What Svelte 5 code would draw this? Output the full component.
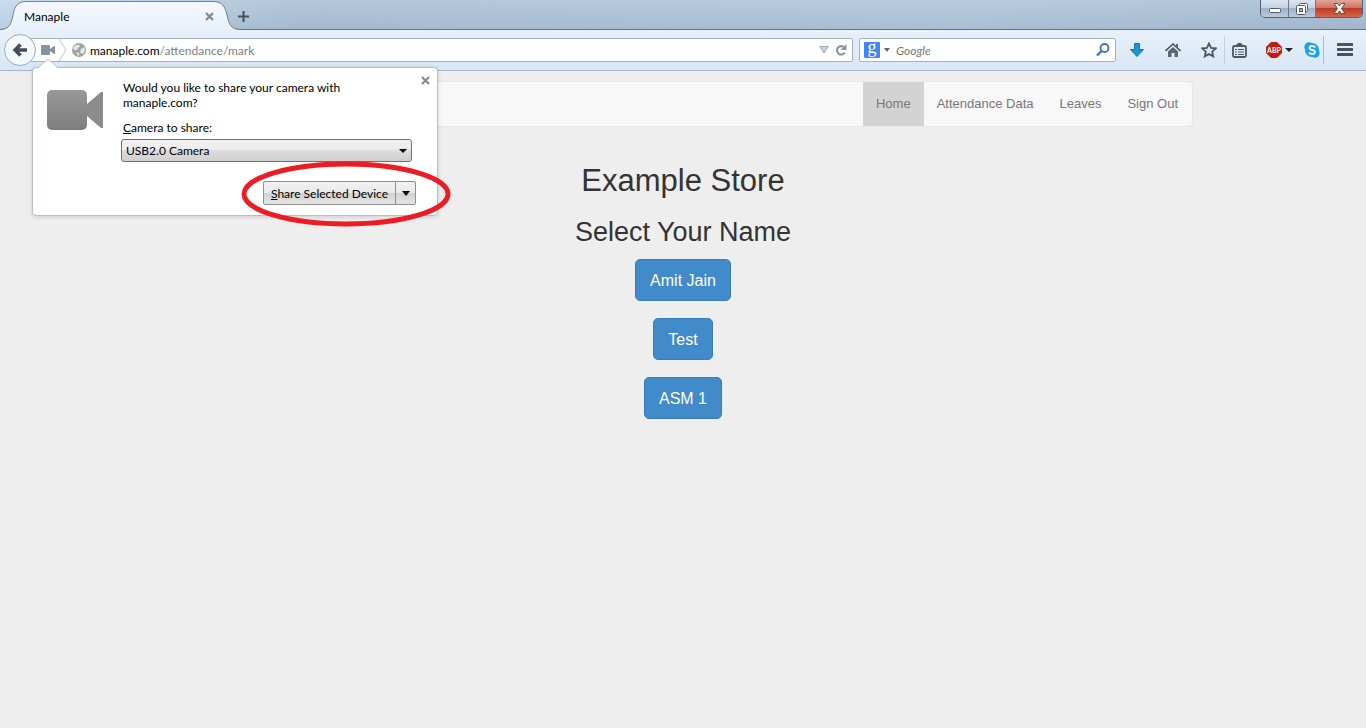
<script>
  const links = ['Home', 'Attendance Data', 'Leaves', 'Sign Out'];
  const names = ['Amit Jain', 'Test', 'ASM 1'];
  let query = $state('');
</script>

<div class="browser">
  <header class="tabs">
    <div class="tab">
      <svg class="tab-shape" viewBox="0 0 240 30" preserveAspectRatio="none" aria-hidden="true">
        <defs>
          <linearGradient id="tabfill" x1="0" y1="0" x2="0" y2="1">
            <stop offset="0" stop-color="#f4f8fd" /><stop offset="1" stop-color="#e8f1fa" />
          </linearGradient>
        </defs>
        <path d="M0 30C10 29 11 24 13 15C15 5 18 2 27 2H213C222 2 225 6 227 15C229 25 231 29 240 30Z" fill="url(#tabfill)" />
        <path d="M0 29.500C10 29 11 24 13 15C15 5 18 1.500 27 1.500H213C222 1.500 225 6 227 15C229 25 231 29 240 29.500" fill="none" stroke="#71849a" />
      </svg>
      <span class="title">Manaple</span>
      <button class="plain close" aria-label="Close tab">
        <svg width="9" height="9" viewBox="0 0 9 9"><path d="M1 1l7 7M8 1l-7 7" stroke="#7d8995" stroke-width="2.200" /></svg>
      </button>
    </div>
    <button class="plain new" aria-label="New tab">
      <svg width="11" height="11" viewBox="0 0 11 11"><path d="M5.500 0v11M0 5.500h11" stroke="#44505b" stroke-width="2" /></svg>
    </button>
    <div class="controls">
      <button class="min" aria-label="Minimize">
        <svg width="14" height="6" viewBox="0 0 14 6"><rect x="1.500" y=".5" width="11" height="4" rx="1" fill="#fff" stroke="#4f5b69" /></svg>
      </button>
      <button class="max" aria-label="Restore">
        <svg width="12" height="12" viewBox="0 0 12 12"><rect x="3.500" y=".5" width="8" height="8" rx="1" fill="#fff" stroke="#4f5b69" /><rect x=".5" y="2.500" width="9" height="9" rx="1" fill="#fff" stroke="#4f5b69" /><rect x="3.500" y="5.500" width="3" height="3" fill="#9fb2c6" stroke="#4f5b69" /></svg>
      </button>
      <button class="exit" aria-label="Close window">
        <svg width="13" height="11" viewBox="0 0 13 11"><path d="M1 .5h3.500l2 2.500 2-2.500H12L8.500 5.500l3.500 5H8.500l-2-2.500-2 2.500H1l3.500-5z" fill="#fff" stroke="#5b4a52" /></svg>
      </button>
    </div>
  </header>

  <div class="toolbar">
    <button class="back" aria-label="Back">
      <svg width="16" height="16" viewBox="0 0 16 16"><path d="M8.500 2.500L3 8L8.500 13.500M3.500 8H15" fill="none" stroke="#424f5a" stroke-width="3.400" /></svg>
    </button>
    <div class="url">
      <svg width="14" height="10" viewBox="0 0 14 10"><rect width="9" height="10" rx="1" fill="#8493a3" /><path d="M9 4l4-3h1v8h-1L9 6z" fill="#8493a3" /></svg>
      <svg class="chevron" width="9" height="22" viewBox="0 0 9 22"><path d="M1 0l7 11-7 11" fill="none" stroke="#b9c5d1" /></svg>
      <svg class="globe" width="14" height="14" viewBox="0 0 14 14"><circle cx="7" cy="7" r="7" fill="#a3a3a3" /><path d="M3 2.500l4-1 1 2-2 1.500-1 2H2L1 5zM9 6l3-2 1 3-1 3-2 1-2-2zM4 9l3 1 .5 2L6 13z" fill="#e6e6e6" /></svg>
      <span class="address">manaple.com<i>/attendance/mark</i></span>
      <button class="plain" aria-label="History"><svg width="10" height="8" viewBox="0 0 10 8"><path d="M.7 .5h8.600L5 7z" fill="#ccd3da" stroke="#9ba8b5" /></svg></button>
      <button class="plain reload" aria-label="Reload"><svg width="12" height="12" viewBox="0 0 12 12"><path d="M8.800 3A4.200 4.200 0 1 0 9.800 8.500" fill="none" stroke="#8997a5" stroke-width="2.200" /><path d="M11.500 0v6h-6z" fill="#8997a5" /></svg></button>
    </div>
    <div class="search">
      <span class="google">g</span>
      <svg width="6" height="4" viewBox="0 0 6 4"><path d="M0 0h6L3 4z" fill="#666" /></svg>
      <input aria-label="Search" placeholder="Google" bind:value={query} />
      <button class="plain" aria-label="Search Google"><svg width="14" height="14" viewBox="0 0 14 14"><circle cx="8.500" cy="5" r="4" fill="none" stroke="#3f74b1" stroke-width="1.800" /><path d="M5.500 8L1 12.500" stroke="#3f74b1" stroke-width="2.400" /></svg></button>
    </div>
    <nav class="tools" aria-label="Browser tools">
      <button class="plain t36" aria-label="Downloads"><svg width="14" height="14" viewBox="0 0 14 14"><path d="M4.500 .5h5v6h4L7 13.500 .5 6.500h4z" fill="#1a96d5" stroke="#0878b7" /></svg></button>
      <button class="plain t36" aria-label="Home page"><svg width="16" height="15" viewBox="0 0 16 15"><path d="M.5 8L8 1l7.500 7" fill="none" stroke="#4b5762" stroke-width="1.600" /><path d="M11 1h2v4l-2-2zM3 8.500l5-4.500 5 4.500V14H9.500v-4h-3v4H3z" fill="#5b6670" /></svg></button>
      <button class="plain t36" aria-label="Bookmark"><svg width="16" height="16" viewBox="0 0 16 16"><path d="M8 1.500l2 4.400 4.800.5-3.600 3.200 1 4.800L8 12l-4.200 2.400 1-4.800L1.200 6.400 6 5.900z" fill="none" stroke="#4b5762" stroke-width="1.800" /></svg></button>
      <button class="plain list" aria-label="Bookmarks list"><svg width="15" height="15" viewBox="0 0 15 15"><rect x="1" y="3" width="13" height="11" rx="1.500" fill="none" stroke="#4b5762" stroke-width="1.800" /><path d="M4 3V1.500h1.500V0h4v1.500H11V3z" fill="#4b5762" /><path d="M3 6.500h2m1 0h6M3 9h2m1 0h6M3 11.500h2m1 0h6" stroke="#4b5762" /></svg></button>
      <button class="plain abp" aria-label="Adblock Plus">
        <svg width="16" height="16" viewBox="0 0 16 16"><path d="M5 .5h6L15.500 5v6L11 15.500H5L.5 11V5z" fill="#c81a0b" stroke="#9d2b20" /><text x="8" y="11" text-anchor="middle" font-size="7" font-weight="700" fill="#fff">ABP</text></svg>
        <svg width="8" height="4" viewBox="0 0 8 4"><path d="M0 0h8L4 4z" fill="#222" /></svg>
      </button>
      <button class="plain skype" aria-label="Skype"><svg width="16" height="16" viewBox="0 0 16 16"><circle cx="5" cy="5" r="4.700" fill="#12a5ee" /><circle cx="11" cy="11" r="4.700" fill="#12a5ee" /><circle cx="8" cy="8" r="7" fill="#12a5ee" /><path d="M11 5.500C10 3.500 5.500 3.500 5.500 6c0 2.500 5.500 1.500 5.500 4 0 2.500-5 2.500-6 .3" fill="none" stroke="#fff" stroke-width="1.900" /></svg></button>
      <button class="plain menu" aria-label="Menu"><svg width="16" height="14" viewBox="0 0 16 14"><path d="M1 1.500h14M1 6.500h14M1 11.500h14" stroke="#48535e" stroke-width="3" stroke-linecap="round" /></svg></button>
    </nav>
  </div>

  <main>
    <nav class="navbar" aria-label="Main">
      {#each links as link, i}
        <a href="#{i}" class:active={i === 0}>{link}</a>
      {/each}
    </nav>
    <h1>Example Store</h1>
    <h2>Select Your Name</h2>
    <div class="names">
      {#each names as name}<button>{name}</button>{/each}
    </div>
  </main>

  <section class="popup" aria-label="Share camera">
    <svg class="arrow" width="20" height="10" viewBox="0 0 20 10"><path d="M0 10L10 1l10 9" fill="#fff" stroke="#b6c2ce" /><path d="M1 10h18" stroke="#fff" /></svg>
    <svg class="camera" width="56" height="40" viewBox="0 0 56 40"><defs><linearGradient id="cam" x1="0" y1="0" x2="0" y2="1"><stop stop-color="#999" /><stop offset="1" stop-color="#7d7d7d" /></linearGradient></defs><rect width="40" height="40" rx="5" fill="url(#cam)" /><path d="M40 14L54 2h2v36h-2L40 26z" fill="#8c8c8c" /></svg>
    <div class="body">
      <p>Would you like to share your camera with manaple.com?</p>
      <label for="device"><u>C</u>amera to share:</label>
      <div class="picker">
        <select id="device"><option>USB2.0 Camera</option></select>
        <svg width="8" height="4" viewBox="0 0 8 4"><path d="M0 0h8L4 4z" /></svg>
      </div>
      <div class="split">
        <button class="share"><u>S</u>hare Selected Device</button>
        <button class="more" aria-label="More options"><svg width="8" height="5" viewBox="0 0 8 5"><path d="M0 0h8L4 5z" /></svg></button>
      </div>
    </div>
    <button class="plain dismiss" aria-label="Dismiss"><svg width="9" height="9" viewBox="0 0 9 9"><path d="M1 1l7 7M8 1l-7 7" stroke="#848e99" stroke-width="2.200" /></svg></button>
    <svg class="ring" width="210" height="66" viewBox="0 0 210 66" aria-hidden="true"><ellipse cx="105" cy="33" rx="102" ry="30" fill="none" stroke="#ed1c24" stroke-width="5" /></svg>
  </section>
</div>

<style>
  :global(body) { margin: 0; background: #eee; }
  * { box-sizing: border-box; }
  svg { display: block; flex: none; }
  .browser { position: relative; font: 12px/15px Lato, "Open Sans", sans-serif; color: #000; }
  button { font: inherit; }
  .plain { display: flex; align-items: center; justify-content: center; padding: 0; border: 0; background: none; }
  .tabs { display: flex; height: 30px; background: linear-gradient(rgba(255,255,255,.08), rgba(90,110,135,.12)), linear-gradient(90deg, #c5daee 0, #afc3d7 300px, #b4c8dc 70%, #abc0d5); box-shadow: inset 0 -1px #5f7389; }
  .tab { position: relative; display: flex; align-items: center; width: 240px; padding: 2px 26px 0 24px; }
  .tab-shape { position: absolute; inset: 0; width: 240px; height: 30px; }
  .title { position: relative; flex: 1; }
  .close { position: relative; }
  .new { width: 6px; overflow: visible; padding-top: 2px; }
  .controls { display: flex; height: 18px; margin-left: auto; margin-right: 3px; border: 1px solid #536274; border-top: 0; border-radius: 0 0 5px 5px; overflow: hidden; }
  .controls button { display: flex; align-items: center; justify-content: center; border: 0; padding: 0; background: linear-gradient(#dbe5ef, #c4d1df 48%, #9fb2c7 50%, #bccbdc); }
  .controls .min { width: 28px; padding-top: 4px; border-right: 1px solid #69788a; }
  .controls .max { width: 27px; border-right: 1px solid #69788a; }
  .controls .exit { width: 46px; background: linear-gradient(#e1a598, #d1705f 48%, #bd3a22 50%, #d5674a); }
  .toolbar { display: flex; align-items: center; height: 41px; padding-left: 4px; background: linear-gradient(#e8f1fa, #d8e6f5); border-bottom: 1px solid #a3b7cf; }
  .back { z-index: 1; display: flex; align-items: center; justify-content: center; flex: none; width: 32px; height: 32px; padding: 0; border: 1px solid #9aabbd; border-radius: 50%; background: #f5f9fd; }
  .url, .search { display: flex; align-items: center; height: 24px; border: 1px solid #a2b1c1; border-radius: 2px; background: #fff; }
  .url { flex: 1; margin-left: -16px; padding: 0 5px 0 20px; }
  .chevron { margin-left: 3px; }
  .globe { margin: 0 4px 0 5px; }
  .address { flex: 1; }
  .address i { font-style: normal; color: #808080; }
  .reload { margin-left: 6px; }
  .search { width: 257px; margin-left: 6px; padding: 0 5px 0 4px; }
  .google { width: 16px; height: 16px; margin-right: 4px; border-radius: 1px; background: #4285f4; color: #fff; font: 18px/11px "Liberation Serif", serif; text-align: center; }
  .search input { flex: 1; min-width: 0; margin-left: 6px; padding: 0; border: 0; outline: 0; background: none; font: inherit; }
  .search input::placeholder { color: #777; font-style: italic; opacity: 1; }
  .tools { display: flex; align-items: center; margin-left: 3px; }
  .tools button { height: 28px; }
  .t36 { width: 36px; }
  .list { width: 30px; border-left: 1px solid #c1d0df; margin-left: -3px; }
  .tools .abp { width: 42px; gap: 3px; padding-left: 8px; }
  .tools .skype { width: 28px; border-right: 1px solid #aebdcd; padding-left: 4px; }
  .tools .menu { width: 42px; }
  main { display: flex; flex-direction: column; align-items: center; padding-top: 10px; font-family: "Liberation Sans", sans-serif; color: #333; }
  .navbar { display: flex; justify-content: flex-end; width: calc(100% - 346px); max-width: 1170px; height: 46px; padding-right: 1px; border: 1px solid #e7e7e7; border-radius: 4px; background: #f8f8f8; }
  .navbar a { padding: 0 13px; font-size: 13px; line-height: 44px; color: #777; text-decoration: none; }
  .navbar .active { background: #d3d3d3; }
  h1, h2 { font-weight: 500; margin: 0; }
  h1 { margin-top: 37px; font-size: 31px; line-height: 34px; }
  h2 { margin-top: 19px; font-size: 27px; line-height: 30px; }
  .names { display: flex; flex-direction: column; align-items: center; gap: 17px; margin-top: 12px; }
  .names button { height: 42px; padding: 0 14px; border: 1px solid #357ebd; border-radius: 5px; background: #428bca; color: #fff; font-size: 16px; }
  .popup { position: absolute; top: 67px; left: 32px; display: flex; width: 406px; height: 149px; padding: 12px 14px; border: 1px solid #b8bec5; border-radius: 4px; background: #fff; box-shadow: 0 1px 4px rgba(0,0,0,.14); }
  .arrow { position: absolute; top: -10px; left: 5px; }
  .camera { margin-top: 10px; }
  .body { width: 296px; margin-left: 18px; }
  .body p { width: 240px; margin: 0 0 10px 2px; }
  .body label { display: block; margin: 0 0 4px 2px; }
  .picker { display: flex; align-items: center; width: 291px; }
  .picker select { appearance: none; width: 100%; height: 23px; padding: 0 4px; border: 1px solid #707070; border-radius: 3px; background: linear-gradient(#f2f2f2, #ebebeb 48%, #ddd 50%, #cfcfcf); font: inherit; color: #000; }
  .picker svg { margin-left: -13px; pointer-events: none; }
  .split { display: flex; width: 153px; height: 24px; margin: 19px 0 0 142px; }
  .split button { padding: 0; border: 1px solid #8e8f8f; background: linear-gradient(#f2f2f2, #e9e9e9 48%, #d2d2d2 50%, #e4e4e4); white-space: nowrap; }
  .share { flex: 1; border-radius: 2px 0 0 2px; }
  .split .more { display: flex; align-items: center; justify-content: center; width: 21px; margin-left: -1px; border-radius: 0 2px 2px 0; }
  .dismiss { position: absolute; top: 8px; right: 7px; }
  .ring { position: absolute; top: 93px; left: 208px; pointer-events: none; }
</style>
